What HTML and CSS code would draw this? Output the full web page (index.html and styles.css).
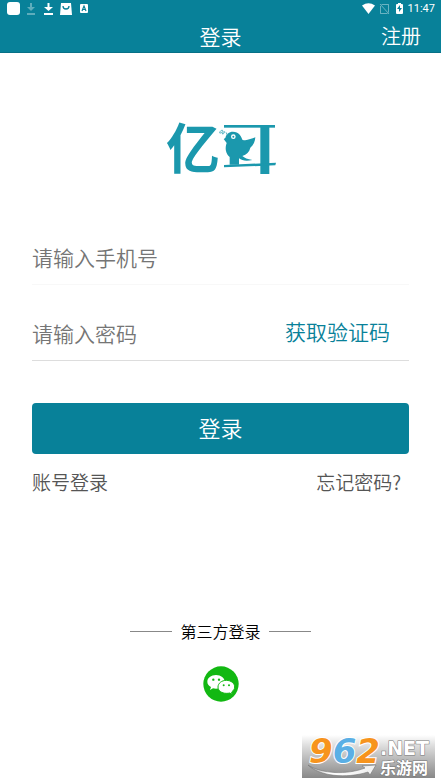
FILE: index.html
```html
<!DOCTYPE html>
<html lang="zh-CN">
<head>
<meta charset="utf-8">
<meta name="viewport" content="width=device-width, initial-scale=1">
<title>登录</title>
<link rel="stylesheet" href="styles.css">
</head>
<body>
<header class="top">
  <div class="status">
    <svg class="status-left" width="92" height="18" viewBox="0 0 92 18" aria-hidden="true">
      <rect x="7" y="2" width="13" height="13" rx="3" fill="#fff"/>
      <g fill="#fff" opacity=".35"><path d="M30 3h2v4h3l-4 4-4-4h3z"/><rect x="27" y="13" width="8" height="2"/></g>
      <g fill="#fff"><path d="M47.500 3h2v4h3.500l-4.500 4-4.500-4h3.500z"/><rect x="44" y="13" width="9" height="2"/></g>
      <path d="M61 3h10l1 12H60z" fill="#fff"/>
      <path d="M63 6c0 4 6 4 6 0" fill="none" stroke="#088199" stroke-width="1.300"/>
      <rect x="80" y="4" width="8" height="9" rx="1" fill="#fff"/>
      <path d="M82 11l2-5 2 5M83 9.500h2" fill="none" stroke="#088199" stroke-width="1.200"/>
    </svg>
    <div class="status-right">
      <svg width="42" height="18" viewBox="0 0 42 18" aria-hidden="true">
        <path d="M0 5.500q6.500-4.500 13 0L6.500 14z" fill="#fff"/>
        <g opacity=".4" fill="none" stroke="#fff"><path d="M18 4l9 10M19.500 4.500h7v8M18.500 6v7.500h7"/></g>
        <path d="M35 4h1V3h3v1h1q1 0 1 1v8q0 1-1 1h-5q-1 0-1-1V5q0-1 1-1z" fill="#fff"/>
        <path d="M38 5l-3 4h2v3l3-4h-2z" fill="#088199"/>
      </svg>
      <time>11:47</time>
    </div>
  </div>
  <div class="bar">
    <h1>登录</h1>
    <a class="register" href="#register">注册</a>
  </div>
</header>
<main>
  <svg class="logo" width="130" height="75" viewBox="0 0 390 225" role="img" aria-label="亿耳">
    <text class="logo-text" x="30" y="176">亿</text>
    <g fill="#1b98ad">
      <rect x="204" y="45" width="153" height="8"/>
      <rect x="313" y="48" width="27" height="144"/>
      <path d="M204 165l156-7-2 8-154 6z"/>
      <path d="M208 84c2-12 11-19 23-19 17 0 24 12 28 24 12 5 26-3 39-7-1 13-5 23-15 31-3 13-11 21-24 25 6 6 16 10 30 12-18 4-31 2-40-5v19h-28v-23c-12-10-15-26-9-42l-9-12z"/>
    </g>
    <circle cx="232" cy="80" r="7" fill="#fff"/>
    <circle cx="232" cy="80" r="3" fill="#1b98ad"/>
    <path d="M191 69c1-7 6-9 9-8-1 6-4 9-9 8M199 72c0-5 3-7 7-7-1 4-3 7-7 7M210 67l4 8" fill="none" stroke="#5db5c3" stroke-width="3"/>
  </svg>
  <form>
    <div class="field phone">
      <input type="tel" aria-label="手机号" placeholder="请输入手机号">
    </div>
    <div class="field">
      <input type="password" aria-label="密码" placeholder="请输入密码">
      <button class="code" type="button">获取验证码</button>
    </div>
    <button class="submit" type="submit">登录</button>
  </form>
  <nav class="links">
    <a href="#account">账号登录</a>
    <a href="#forgot">忘记密码?</a>
  </nav>
  <section class="third">
    <h2>第三方登录</h2>
    <button class="wechat" type="button" aria-label="微信">
      <svg width="36" height="36" viewBox="0 0 108 108" aria-hidden="true">
        <circle cx="54" cy="54" r="53" fill="#12b812"/>
        <path d="M39 27c15 0 26 9 26 20S54 68 39 68c-3 0-6 0-9-1l-9 5 3-9c-7-4-11-9-11-16 0-11 11-20 26-20z" fill="#fff"/>
        <path d="M70 43c14 0 25 9 25 20 0 6-4 11-9 15l2 7-8-4c-3 1-6 1-10 1-14 0-25-8-25-19s11-20 25-20z" fill="#fff" stroke="#12b812" stroke-width="3"/>
        <g fill="#12b812"><circle cx="31" cy="41" r="3.500"/><circle cx="48" cy="41" r="3.500"/><circle cx="62" cy="58" r="3"/><circle cx="78" cy="58" r="3"/></g>
      </svg>
    </button>
  </section>
</main>
<svg class="mark" width="133" height="43" viewBox="0 0 133 43" role="img" aria-label="962.NET 乐游网">
  <defs>
    <linearGradient id="shade" x2="0" y2="1"><stop offset="0" stop-color="#fff"/><stop offset=".25" stop-color="#ddd"/><stop offset="1" stop-color="#888"/></linearGradient>
    <linearGradient id="swoosh" x2="1"><stop offset="0" stop-color="#999"/><stop offset=".3" stop-color="#fff"/><stop offset="1" stop-color="#eee"/></linearGradient>
  </defs>
  <rect width="133" height="43" fill="url(#shade)"/>
  <path d="M6 30c14 9 39 10 57 3l-3-2 14-1-6 10-2-3c-22 7-49 4-60-7z" fill="url(#swoosh)" stroke="#777" stroke-width=".600"/>
  <text class="mark-num" x="7" y="28"><tspan class="orange">9</tspan><tspan class="blue">6</tspan><tspan class="orange">2</tspan></text>
  <text class="mark-net" x="78" y="20">.NET</text>
  <text class="mark-cn" x="78" y="39">乐游网</text>
</svg>
</body>
</html>
```
FILE: styles.css
```css
* { box-sizing: border-box; }
body {
  position: relative;
  min-height: 100vh;
  margin: 0;
  background: #fff;
  color: #555;
  font-family: "Noto Sans CJK SC", sans-serif;
  font-weight: 350;
}
a { color: inherit; text-decoration: none; }
button, input {
  margin: 0;
  padding: 0;
  border: 0;
  background: none;
  font: inherit;
}
svg { display: block; flex: none; overflow: visible; }
.top {
  height: 53px;
  background: #088199;
  border-bottom: 1px solid #077086;
  color: #fff;
}
.status {
  display: flex;
  justify-content: space-between;
  height: 18px;
}
.status-right {
  display: flex;
  gap: 4px;
  padding-right: 6px;
  font: 400 11px/18px Roboto, sans-serif;
}
.bar {
  display: grid;
  grid-template-columns: 1fr auto 1fr;
  align-items: center;
  height: 34px;
  padding: 0 20px;
}
.bar h1 {
  grid-column: 2;
  margin: 0;
  font-size: 21px;
  font-weight: 350;
  line-height: 34px;
}
.register {
  justify-self: end;
  font-size: 20px;
  line-height: 36px;
}
main { padding: 57px 32px 0; }
.logo { margin: 0 auto 24px; }
.logo-text {
  fill: #1b98ad;
  font-size: 162px;
  font-weight: 700;
}
.field {
  display: flex;
  align-items: center;
  height: 76px;
  padding: 24px 0 4px;
  border-bottom: 1px solid #ddd;
  font-size: 21px;
}
.phone { border-color: #f8f8f8; }
.field input {
  flex: 1;
  min-width: 0;
  height: 36px;
}
.field input::placeholder { color: #757575; opacity: 1; }
.code {
  margin-right: 19px;
  padding-bottom: 4px;
  color: #088199;
}
.submit {
  width: 100%;
  height: 51px;
  margin-top: 42px;
  padding-bottom: 4px;
  border-radius: 4px;
  background: #088199;
  color: #fff;
  font-size: 22px;
}
form { display: flex; flex-direction: column; }
.links {
  display: flex;
  justify-content: space-between;
  padding: 14px 8px 0 0;
  font-size: 19px;
  line-height: 28px;
}
.third { padding-top: 123px; }
.third h2 {
  display: flex;
  align-items: center;
  justify-content: center;
  gap: 8px;
  margin: 0;
  color: #000;
  font-size: 16px;
  font-weight: 350;
  line-height: 24px;
}
.third h2::before, .third h2::after {
  content: "";
  width: 42px;
  height: 1px;
  background: #888;
}
.wechat { display: block; margin: 23px auto 0; }
.mark {
  position: absolute;
  right: 6px;
  bottom: 6px;
}
.mark-num {
  font: italic 700 34px "DejaVu Sans", sans-serif;
  stroke: #fff;
  stroke-width: 2px;
  paint-order: stroke;
}
.orange { fill: #f7941d; }
.blue { fill: #5aafe5; }
.mark-net {
  fill: #fff;
  font: 700 19px "DejaVu Sans", sans-serif;
  stroke: #777;
  stroke-width: 1px;
  paint-order: stroke;
}
.mark-cn {
  fill: #fff;
  font-size: 16px;
  font-weight: 700;
  stroke: #777;
  stroke-width: 1px;
  paint-order: stroke;
}
```
